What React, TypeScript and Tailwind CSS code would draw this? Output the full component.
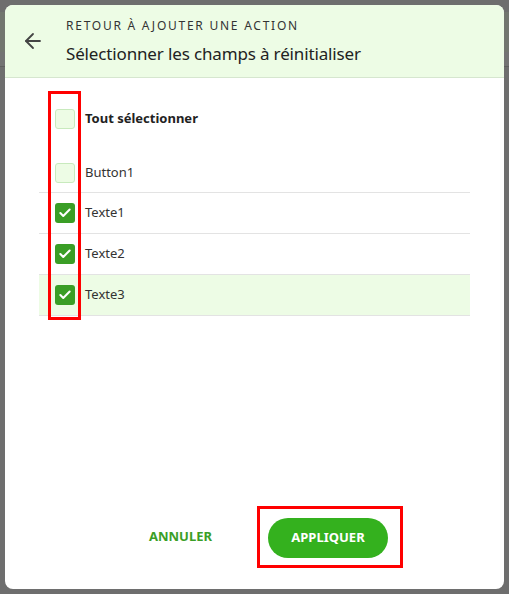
import { ArrowLeft, Check } from 'lucide-react';

const font = { fontFamily: '"Segoe UI", "Noto Sans", "Open Sans", sans-serif' };

type Row = { label: string; checked: boolean; bold?: boolean; active?: boolean };

const fields: Row[] = [
  { label: 'Texte1', checked: true },
  { label: 'Texte2', checked: true },
  { label: 'Texte3', checked: true, active: true },
];

function Box({ checked }: { checked: boolean }) {
  return checked ? (
    <span className="flex h-5 w-5 items-center justify-center rounded-[3px] bg-[#3a9e26]">
      <Check className="h-3.5 w-3.5 text-white" strokeWidth={3.5} />
    </span>
  ) : (
    <span className="h-5 w-5 rounded-[3px] border border-[#c8eabd] bg-[#edfce5]" />
  );
}

export default function App() {
  return (
    <div className="relative h-[594px] w-[509px] overflow-hidden bg-[#6e6e6e] p-[5px]" style={font}>
      {/* faded page behind the dialog */}
      <div className="absolute left-0 right-0 top-[12px] h-[40px] bg-[#72766f]" />
      <div className="absolute left-0 right-0 top-[52px] h-[15px] border-b border-[#5f5f5f] bg-[#737373]" />

      <div className="relative flex h-[584px] w-[499px] flex-col overflow-hidden rounded-lg bg-white">
        {/* Header */}
        <div className="flex h-[73px] shrink-0 items-center border-b border-[#d6e6cf] bg-[#edfce5]">
          <div className="flex w-[61px] justify-start pl-[16px]">
            <ArrowLeft className="h-[24px] w-[24px] text-[#444]" strokeWidth={1.8} />
          </div>
          <div className="flex flex-col">
            <span className="text-[12px] uppercase leading-[16px] tracking-[1.75px] text-[#333]">
              Retour à ajouter une action
            </span>
            <span className="mt-[9px] text-[17px] leading-[22px] tracking-[-0.15px] text-[#222]">
              Sélectionner les champs à réinitialiser
            </span>
          </div>
        </div>

        {/* Field list */}
        <div className="relative px-[34px] pt-[31px]">
          <div className="pointer-events-none absolute left-[43px] top-[13px] h-[229px] w-[33px] border-[3px] border-[#ff0000]" />
          <div className="flex h-[20px] items-center gap-[10px] pl-[16px]">
            <Box checked={false} />
            <span className="text-[13px] font-bold text-[#222]">Tout sélectionner</span>
          </div>
          <div className="mt-[34px] flex h-[20px] items-center gap-[10px] pl-[16px]">
            <Box checked={false} />
            <span className="text-[13px] text-[#333]">Button1</span>
          </div>
          <div className="mt-[9px] border-t border-[#e3e3e3]">
            {fields.map((f) => (
              <div
                key={f.label}
                className={`flex h-[41px] items-center gap-[10px] border-b border-[#e3e3e3] pl-[16px] ${f.active ? 'bg-[#edfce5]' : ''}`}
              >
                <Box checked={f.checked} />
                <span className="text-[13px] text-[#333]">{f.label}</span>
              </div>
            ))}
          </div>
        </div>

        {/* Footer */}
        <div className="mt-auto flex items-center pb-[21px] pl-[143px]">
          <button className="w-[65px] text-[13px] font-bold uppercase text-[#3a9e26]">Annuler</button>
          <div className="ml-[44px] border-[3px] border-[#ff0000] pb-[7px] pl-[8px] pr-[12px] pt-[9px]">
            <button className="block h-[40px] w-[120px] rounded-full bg-[#34b11e] text-[13px] font-bold uppercase text-white">
              Appliquer
            </button>
          </div>
        </div>
      </div>
    </div>
  );
}
